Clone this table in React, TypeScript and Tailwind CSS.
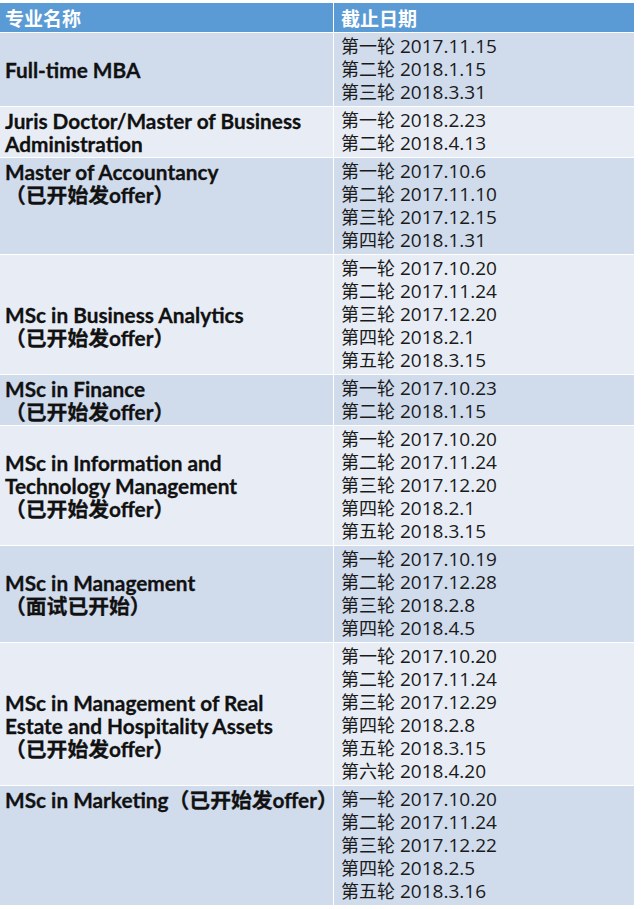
import React from "react";

type Row = { name: string[]; offset: number; dates: string[] };

const rows: Row[] = [
  { name: ["Full-time MBA"], offset: 1, dates: ["第一轮 2017.11.15", "第二轮 2018.1.15", "第三轮 2018.3.31"] },
  { name: ["Juris Doctor/Master of Business", "Administration"], offset: 0, dates: ["第一轮 2018.2.23", "第二轮 2018.4.13"] },
  { name: ["Master of Accountancy", "（已开始发offer）"], offset: 0, dates: ["第一轮 2017.10.6", "第二轮 2017.11.10", "第三轮 2017.12.15", "第四轮 2018.1.31"] },
  { name: ["MSc in Business Analytics", "（已开始发offer）"], offset: 2, dates: ["第一轮 2017.10.20", "第二轮 2017.11.24", "第三轮 2017.12.20", "第四轮 2018.2.1", "第五轮 2018.3.15"] },
  { name: ["MSc in Finance", "（已开始发offer）"], offset: 0, dates: ["第一轮 2017.10.23", "第二轮 2018.1.15"] },
  { name: ["MSc in Information and", "Technology Management", "（已开始发offer）"], offset: 1, dates: ["第一轮 2017.10.20", "第二轮 2017.11.24", "第三轮 2017.12.20", "第四轮 2018.2.1", "第五轮 2018.3.15"] },
  { name: ["MSc in Management", "（面试已开始）"], offset: 1, dates: ["第一轮 2017.10.19", "第二轮 2017.12.28", "第三轮 2018.2.8", "第四轮 2018.4.5"] },
  { name: ["MSc in Management of Real", "Estate and Hospitality Assets", "（已开始发offer）"], offset: 2, dates: ["第一轮 2017.10.20", "第二轮 2017.11.24", "第三轮 2017.12.29", "第四轮 2018.2.8", "第五轮 2018.3.15", "第六轮 2018.4.20"] },
  { name: ["MSc in Marketing（已开始发offer）"], offset: 0, dates: ["第一轮 2017.10.20", "第二轮 2017.11.24", "第三轮 2017.12.22", "第四轮 2018.2.5", "第五轮 2018.3.16"] },
];

const nameFont = { fontFamily: '"Lato", "Noto Sans CJK SC", sans-serif' };
const dateFont = { fontFamily: '"Open Sans", "Noto Sans CJK SC", sans-serif' };

function DateLine({ text }: { text: string }) {
  const [cn, num] = text.split(" ");
  return (
    <div className="h-[23px] flex items-center whitespace-nowrap">
      <span className="inline-block h-[23px] text-[18px] leading-[23px]">{cn}</span>
      <span className="inline-block h-[23px] text-[19px] leading-[23px] pl-[5px]">{num}</span>
    </div>
  );
}

export default function App() {
  return (
    <div className="w-[642px] h-[909px] bg-white pt-[3px]">
      <div className="grid grid-cols-[333px_300px] gap-px bg-white w-[634px]">
        <div
          className="h-[29px] bg-[#5b9bd5] text-white font-bold text-[19px] leading-[29px] pl-[5px]"
          style={{ fontFamily: '"Noto Sans CJK SC", sans-serif' }}
        >
          专业名称
        </div>
        <div
          className="h-[29px] bg-[#5b9bd5] text-white font-bold text-[19px] leading-[29px] pl-[7px]"
          style={{ fontFamily: '"Noto Sans CJK SC", sans-serif' }}
        >
          截止日期
        </div>
        {rows.map((r, i) => {
          const bg = i % 2 === 0 ? "bg-[#d0dbec]" : "bg-[#e8edf5]";
          return (
            <React.Fragment key={i}>
              <div
                className={`${bg} py-[2px] pl-[5px] text-[#111] font-bold text-[20.8px] [-webkit-text-stroke:0.3px_#111]`}
                style={nameFont}
              >
                {Array.from({ length: r.offset }).map((_, k) => (
                  <div key={"e" + k} className="h-[23px]" />
                ))}
                {r.name.map((n, k) => (
                  <div key={k} className="h-[23px] flex items-center whitespace-nowrap">
                    <span className="inline-block h-[23px] leading-[23px]">{n}</span>
                  </div>
                ))}
              </div>
              <div className={`${bg} py-[2px] pl-[7px] text-[#1a1a1a]`} style={dateFont}>
                {r.dates.map((d, k) => (
                  <DateLine key={k} text={d} />
                ))}
              </div>
            </React.Fragment>
          );
        })}
      </div>
    </div>
  );
}
